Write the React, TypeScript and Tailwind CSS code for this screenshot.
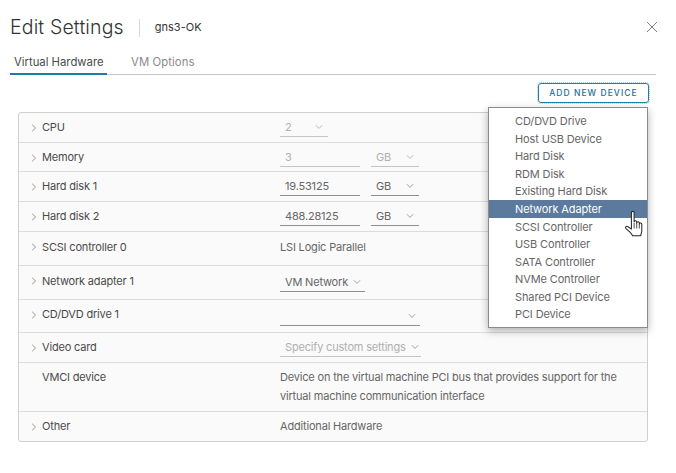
const devices = [
  'CD/DVD Drive',
  'Host USB Device',
  'Hard Disk',
  'RDM Disk',
  'Existing Hard Disk',
  'Network Adapter',
  'SCSI Controller',
  'USB Controller',
  'SATA Controller',
  'NVMe Controller',
  'Shared PCI Device',
  'PCI Device',
]

function Caret() {
  return (
    <svg viewBox="0 0 8 8" className="w-2 h-2 shrink-0 -ml-[0.5px]" fill="none" stroke="#8c8c8c" strokeWidth="0.9">
      <path d="M2.2 0.8 5.6 4 2.2 7.2" />
    </svg>
  )
}

function Down({ className = '', color = '#8c8c8c' }: { className?: string; color?: string }) {
  return (
    <svg viewBox="0 0 9 6" className={`w-[8px] h-[6px] shrink-0 ${className}`} fill="none" stroke={color} strokeWidth="0.9">
      <path d="M1 1 4.5 4.6 8 1" />
    </svg>
  )
}

function Row({
  label,
  h,
  caret = true,
  top = false,
  raised = false,
  children,
}: {
  label: string
  h: string
  caret?: boolean
  top?: boolean
  raised?: boolean
  children?: React.ReactNode
}) {
  return (
    <div className={`flex ${h} border-b border-[#dcdcdc] last:border-b-0 ${top ? 'items-start pt-[5px]' : 'items-center'}`}>
      <div className="w-[11px]" />
      <div className={`w-[12px] flex justify-start ${raised ? 'pb-[3px]' : ''}`}>{caret && <Caret />}</div>
      <div className={`w-[238px] text-[11px] tracking-[-0.18px] text-[#4a4a4a] whitespace-nowrap ${top ? 'leading-[19px]' : ''} ${raised ? 'pb-[3px]' : ''}`}>{label}</div>
      <div className="flex-1 text-[11px] tracking-[-0.18px] text-[#666]">{children}</div>
    </div>
  )
}

function Field({ w, disabled, dark, value, children }: { w: string; disabled?: boolean; dark?: boolean; value: string; children?: React.ReactNode }) {
  return (
    <div
      className={`${w} h-[19px] flex items-center pl-[5px] whitespace-nowrap border-b ${
        dark ? 'border-[#8f8f8f]' : 'border-[#c4c4c4]'
      } ${disabled ? 'text-[#b0b0b0]' : 'text-[#666]'}`}
    >
      {value}
      {children}
    </div>
  )
}

export default function App() {
  return (
    <div className="relative w-[676px] h-[473px] bg-white overflow-hidden font-['Inter','Liberation_Sans',sans-serif]">
      {/* Header */}
      <div className="flex items-center h-[54px] pl-[10px] pr-[18px] pt-[1px]">
        <h1 className="text-[19.5px] leading-none font-light text-[#333] tracking-[0.15px]">Edit Settings</h1>
        <div className="w-px h-[18px] bg-[#d8d8d8] ml-[15px] mr-[15px]" />
        <span className="text-[11px] text-[#333]">gns3-OK</span>
        <svg viewBox="0 0 12 12" className="ml-auto w-3 h-3 -mt-[1px]" fill="none" stroke="#6e6e6e" strokeWidth="0.9">
          <path d="M1 1 11 11M11 1 1 11" />
        </svg>
      </div>

      {/* Tabs */}
      <div className="flex mx-[10px] mr-[20px] h-[21px] border-b border-[#c8c8c8] text-[11.3px]">
        <div className="w-[97px] h-[21px] pl-[4px] border-b-2 border-[#1d7fa8] text-[#4a4a4a]">Virtual Hardware</div>
        <div className="ml-[24px] text-[#8a8a8a] tracking-[0.1px]">VM Options</div>
      </div>

      {/* Toolbar */}
      <div className="flex justify-end pr-[27px] pt-[8px] h-[37px]">
        <button className="w-[111px] h-[20px] rounded-[3px] border border-[#1d7fa8] outline-dotted outline-1 outline-[#1d7fa8]/40 text-[#1d6f96] text-[8.5px] font-medium tracking-[1.05px]">
          ADD NEW DEVICE
        </button>
      </div>

      {/* Settings list */}
      <div className="mx-[18px] w-[630px] h-[330px] border border-[#cfcfcf] rounded-[3px] bg-[#fafafa] flex flex-col">
        <Row label="CPU" h="h-[30px]">
          <Field w="w-[48px]" disabled value="2">
            <Down className="ml-auto mr-[5px]" color="#a8a8a8" />
          </Field>
        </Row>
        <Row label="Memory" h="h-[29px] pt-[1px]">
          <div className="flex items-center gap-[11px]">
            <Field w="w-[80px]" disabled value="3" />
            <Field w="w-[48px]" disabled value="GB">
              <Down className="ml-auto mr-[5px]" color="#a8a8a8" />
            </Field>
          </div>
        </Row>
        <Row label="Hard disk 1" h="h-[30px]">
          <div className="flex items-center gap-[11px]">
            <Field w="w-[80px]" dark value="19.53125" />
            <Field w="w-[48px]" dark value="GB">
              <Down className="ml-auto mr-[5px]" />
            </Field>
          </div>
        </Row>
        <Row label="Hard disk 2" h="h-[30px]">
          <div className="flex items-center gap-[11px]">
            <Field w="w-[80px]" dark value="488.28125" />
            <Field w="w-[48px]" dark value="GB">
              <Down className="ml-auto mr-[5px]" />
            </Field>
          </div>
        </Row>
        <Row label="SCSI controller 0" h="h-[34px]" raised>
          <div className="pb-[3px]">LSI Logic Parallel</div>
        </Row>
        <Row label="Network adapter 1" h="h-[34px]" raised>
          <Field w="w-[85px]" dark value="VM Network">
            <Down className="ml-[5px]" />
          </Field>
        </Row>
        <Row label="CD/DVD drive 1" h="h-[33px]" raised>
          <Field w="w-[140px]" dark value="">
            <Down className="ml-auto mr-[4px]" />
          </Field>
        </Row>
        <Row label="Video card" h="h-[30px]">
          <Field w="w-[141px]" disabled value="Specify custom settings">
            <Down className="ml-[5px]" />
          </Field>
        </Row>
        <Row label="VMCI device" h="h-[49px]" caret={false} top>
          <div className="leading-[19px] w-[350px]">
            Device on the virtual machine PCI bus that provides support for the virtual machine communication interface
          </div>
        </Row>
        <Row label="Other" h="h-[29px]">Additional Hardware</Row>
      </div>

      {/* Add device menu */}
      <div className="absolute left-[488px] top-[107px] w-[160px] h-[221px] bg-white border border-[#8c8c8c] shadow-[0_3px_8px_rgba(0,0,0,0.3)] flex flex-col pt-[4.4px]">
        {devices.map((d) => (
          <div
            key={d}
            className={`h-[17.6px] flex items-center pl-[26px] text-[11px] tracking-[-0.12px] ${
              d === 'Network Adapter' ? 'bg-[#5b7a9d] text-white' : 'text-[#666]'
            }`}
          >
            {d}
          </div>
        ))}
      </div>

      {/* Hand cursor */}
      <svg viewBox="0.5 0.5 15.6 23" className="absolute left-[625px] top-[211px] w-[18px] h-[26px]" fill="white" stroke="#222" strokeWidth="0.9" strokeLinejoin="round">
        <path d="M6 2c0-1.5 2.4-1.5 2.4 0v8c0-1.3 2.3-1.3 2.3 0v1c0-1.3 2.3-1.3 2.3 0v1c0-1.2 2.2-1.2 2.2 0.2v5.6c0 2-.8 3-1 4.6H7c-.6-1.6-1.4-2.2-3-3.8L1.2 16c-1-1.3.6-2.7 1.8-1.6L6 16.5z" />
        <path d="M8.4 11v5M10.7 11v5M13 12v4" fill="none" strokeWidth="0.7" />
      </svg>
    </div>
  )
}
